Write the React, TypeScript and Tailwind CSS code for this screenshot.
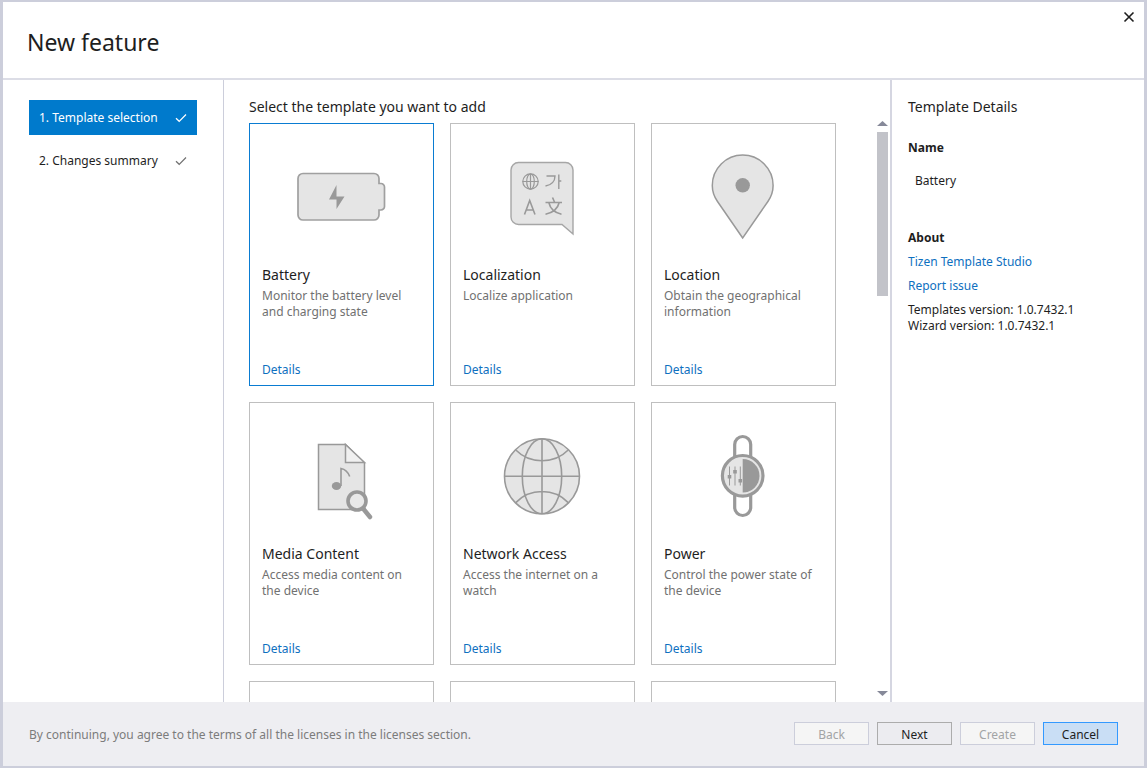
import { useState } from "react";
import type { ReactNode } from "react";

type Template = {
  name: string;
  description: string;
  icon: ReactNode;
};

function BatteryIcon() {
  return (
    <svg width="110" height="105" viewBox="2 0 110 105" aria-hidden="true">
      <path
        d="M18 28.5H89a5 5 0 0 1 5 5V38.500h2a3.500 3.500 0 0 1 3.500 3.500v19.500a3.500 3.500 0 0 1-3.500 3.500H94v5a5 5 0 0 1-5 5H18a5 5 0 0 1-5-5V33.500a5 5 0 0 1 5-5z"
        fill="#e5e5e5"
        stroke="#a0a0a0"
        strokeWidth="1.700"
      />
      <path d="M51.500 40 44 54.500h7.500V64l8-12.500h-8z" fill="#999" />
    </svg>
  );
}

function LocalizationIcon() {
  return (
    <svg width="110" height="105" viewBox="-2 0 110 105" fill="none" stroke="#999" aria-hidden="true">
      <path
        d="M28.500 17.500h47a7.500 7.500 0 0 1 7.500 7.500v64l-11-9.500H28.500a7.500 7.500 0 0 1-7.500-7.500V25a7.500 7.500 0 0 1 7.500-7.500z"
        fill="#e5e5e5"
        stroke="#a6a6a6"
        strokeWidth="1.400"
      />
      <g strokeWidth="1.200">
        <circle cx="40.500" cy="36.500" r="7.700" />
        <ellipse cx="40.500" cy="36.500" rx="3.800" ry="7.700" />
        <path d="M32.500 36.500h16M40.500 29v15.500" />
      </g>
      <path d="M56.500 31h8.500c0 5-3.500 9-9.500 10M68.800 29.500V44M68.800 36h2.500" strokeWidth="1.400" />
      <path d="M34.500 69.500 39.700 55.500 45 69.500M36.300 65h6.900" strokeWidth="1.600" />
      <path
        d="M55.500 57.500h16.500M62.500 52.500l2 4.500M59 58c1.200 5.500 5 9.500 12.500 11.200M69 58c-1.200 5.500-5.500 9.500-13.500 11.200"
        strokeWidth="1.600"
      />
    </svg>
  );
}

function LocationIcon() {
  return (
    <svg width="110" height="105" viewBox="-1 0 110 105" aria-hidden="true">
      <path
        d="M52.700 93 27.500 56.500C24 51.500 22.300 46.500 22.300 40.500a30.400 30.400 0 0 1 60.800 0c0 6-1.700 11-5.200 16z"
        fill="#e5e5e5"
        stroke="#999"
        strokeWidth="1.500"
      />
      <circle cx="52.700" cy="40.300" r="7.200" fill="#999" />
    </svg>
  );
}

function MediaIcon() {
  return (
    <svg width="110" height="105" viewBox="-12 -1 110 105" fill="none" stroke="#999" aria-hidden="true">
      <path d="M19.500 19.500H46.500l19 18.500v46.500h-46z" fill="#e5e5e5" strokeWidth="1.500" />
      <path d="M46.500 19.500V37.500h19z" fill="#f0f0f0" strokeWidth="1.500" />
      <ellipse cx="37.500" cy="61" rx="4.700" ry="4" fill="#999" stroke="none" />
      <path d="M42 61V43.500c4.500.8 7 3.500 8.700 8" strokeWidth="1.600" />
      <circle cx="58" cy="76" r="9" fill="#e9e9e9" strokeWidth="3.600" />
      <path d="m64.500 84 6.500 8" strokeWidth="4.500" strokeLinecap="round" />
    </svg>
  );
}

function NetworkIcon() {
  return (
    <svg width="110" height="105" viewBox="-2 -1 110 105" fill="none" stroke="#999" strokeWidth="1.600" aria-hidden="true">
      <circle cx="52" cy="51.300" r="37.500" fill="#e5e5e5" />
      <ellipse cx="52" cy="51.300" rx="19.700" ry="37.500" />
      <path d="M14.500 51.300h75M52 14v75M25.800 25c14 14.300 38.400 14.300 52.400 0M25.800 77.600c14-14.800 38.400-14.800 52.400 0" />
    </svg>
  );
}

function PowerIcon() {
  return (
    <svg width="110" height="105" viewBox="-1 -1 110 105" fill="none" stroke="#999" aria-hidden="true">
      <path d="M44.700 32V19.500a8 8 0 0 1 16 0V32M44.700 70v12.500a8 8 0 0 0 16 0V70" fill="#fff" strokeWidth="3.200" />
      <circle cx="52.700" cy="50.800" r="20.300" fill="#e5e5e5" strokeWidth="3.200" />
      <path d="M52.700 34a16.800 16.800 0 0 1 0 33.600z" fill="#999" stroke="none" />
      <path d="M39.500 41.500v19M45 41.500v19M50.300 41.500v19" strokeWidth="1" />
      <path d="M37.700 50h3.600v3.400h-3.600zM43.200 45h3.600v3.400h-3.600zM48.500 54h3.600v3.400h-3.600z" fill="#999" stroke="none" />
    </svg>
  );
}

const templates: Template[] = [
  { name: "Battery", description: "Monitor the battery level and charging state", icon: <BatteryIcon /> },
  { name: "Localization", description: "Localize application", icon: <LocalizationIcon /> },
  { name: "Location", description: "Obtain the geographical information", icon: <LocationIcon /> },
  { name: "Media Content", description: "Access media content on the device", icon: <MediaIcon /> },
  { name: "Network Access", description: "Access the internet on a watch", icon: <NetworkIcon /> },
  { name: "Power", description: "Control the power state of the device", icon: <PowerIcon /> },
];

function Check() {
  return (
    <svg width="12" height="10" viewBox="0 0 12 10" fill="none" stroke="currentColor" strokeWidth="1.200" aria-hidden="true">
      <path d="M1 5.200 4.200 8.300 11 1.500" />
    </svg>
  );
}

function Step({ label, active }: { label: string; active?: boolean }) {
  return (
    <button
      type="button"
      className={
        active
          ? "flex h-[35px] w-full items-center justify-between bg-[#007acc] px-2.5 text-white"
          : "flex h-[35px] w-full items-center justify-between px-2.5 text-[#1e1e1e]"
      }
    >
      {label}
      <span className={active ? "text-white" : "text-[#717171]"}>
        <Check />
      </span>
    </button>
  );
}

function Card({ template, selected, onSelect }: { template: Template; selected: boolean; onSelect: () => void }) {
  return (
    <label
      className={
        selected
          ? "flex h-[263px] flex-col border border-[#0a7cd2] px-3 pb-[7px]"
          : "flex h-[263px] flex-col border border-[#bfbfbf] px-3 pb-[7px]"
      }
    >
      <input type="radio" name="template" className="sr-only" checked={selected} onChange={onSelect} />
      <span className="flex h-[141px] items-end justify-center pb-[15px]">{template.icon}</span>
      <span className="text-sm leading-5 text-[#1e1e1e]">{template.name}</span>
      <span className="mt-[3px] text-xs leading-4 text-[#717171]">{template.description}</span>
      <a href="#details" className="mt-auto self-start leading-4 text-[#0e70c0]">
        Details
      </a>
    </label>
  );
}

const buttonBase = "h-[23px] w-[75px] border pt-0.5";

export default function App() {
  const [selected, setSelected] = useState("Battery");

  return (
    <div className="flex h-screen flex-col border-x-[3px] border-y-2 border-[#cccedb] bg-white font-['Noto_Sans','Open_Sans',sans-serif] text-xs text-[#1e1e1e]">
      <header className="flex h-[78px] shrink-0 items-start justify-between border-b-2 border-[#dcdde6] pr-2">
        <h1 className="pt-6 pl-6 text-[23px] leading-8">New feature</h1>
        <button type="button" aria-label="Close" className="pt-2">
          <svg width="14" height="14" viewBox="0 0 14 14" stroke="#1e1e1e" strokeWidth="1.600" aria-hidden="true">
            <path d="m2.500 2.500 9 9m0-9-9 9" />
          </svg>
        </button>
      </header>

      <div className="flex min-h-0 flex-1">
        <nav className="flex w-[221px] shrink-0 flex-col gap-2 border-r border-[#cccedb] px-[26px] py-5">
          <Step label="1. Template selection" active />
          <Step label="2. Changes summary" />
        </nav>

        <main className="flex min-w-0 flex-1 flex-col pt-[17px] pl-[25px]">
          <h2 className="text-sm leading-5">Select the template you want to add</h2>
          <div className="mt-1 flex min-h-0 flex-1 justify-between">
            <div className="grid flex-1 auto-rows-max grid-cols-[repeat(auto-fill,185px)] gap-4 overflow-hidden pt-0.5">
              {templates.map((t) => (
                <Card key={t.name} template={t} selected={t.name === selected} onSelect={() => setSelected(t.name)} />
              ))}
              <div className="h-[263px] border border-[#bfbfbf]" />
              <div className="h-[263px] border border-[#bfbfbf]" />
              <div className="h-[263px] border border-[#bfbfbf]" />
            </div>
            <div className="mr-0.5 flex w-[11px] shrink-0 flex-col items-center justify-between pb-1.5">
              <div className="flex flex-col items-center gap-1.5">
                <svg width="11" height="5" viewBox="0 0 11 5" aria-hidden="true">
                  <path d="M0 5 5.500 0 11 5z" fill="#868999" />
                </svg>
                <div className="h-[164px] w-[11px] bg-[#c2c3c9]" />
              </div>
              <svg width="11" height="5" viewBox="0 0 11 5" aria-hidden="true">
                <path d="M0 0h11L5.500 5z" fill="#868999" />
              </svg>
            </div>
          </div>
        </main>

        <aside className="w-[254px] shrink-0 border-l-2 border-[#d5d6e1] pt-[17px] pl-4">
          <h2 className="text-sm leading-5">Template Details</h2>
          <h3 className="mt-[23px] leading-4 font-bold">Name</h3>
          <p className="mt-[17px] pl-[7px] leading-4">Battery</p>
          <h3 className="mt-[41px] leading-4 font-bold">About</h3>
          <div className="mt-2 flex flex-col items-start gap-2 leading-4 text-[#0e70c0]">
            <a href="#studio">Tizen Template Studio</a>
            <a href="#issue">Report issue</a>
          </div>
          <p className="mt-2 leading-4">Templates version: 1.0.7432.1</p>
          <p className="leading-4">Wizard version: 1.0.7432.1</p>
        </aside>
      </div>

      <footer className="flex h-16 shrink-0 items-center justify-between bg-[#eeeef2] px-[26px] pb-px">
        <p className="pt-0.5 text-[#7c7c7c]">By continuing, you agree to the terms of all the licenses in the licenses section.</p>
        <div className="flex gap-2">
          <button type="button" disabled className={`${buttonBase} border-[#cccedb] bg-[#f5f5f5] text-[#a2a4a5]`}>
            Back
          </button>
          <button type="button" className={`${buttonBase} border-[#acacac] bg-[#ececf0]`}>
            Next
          </button>
          <button type="button" disabled className={`${buttonBase} border-[#cccedb] bg-[#f5f5f5] text-[#a2a4a5]`}>
            Create
          </button>
          <button type="button" className={`${buttonBase} border-[#3399ff] bg-[#c9def5]`}>
            Cancel
          </button>
        </div>
      </footer>
    </div>
  );
}
